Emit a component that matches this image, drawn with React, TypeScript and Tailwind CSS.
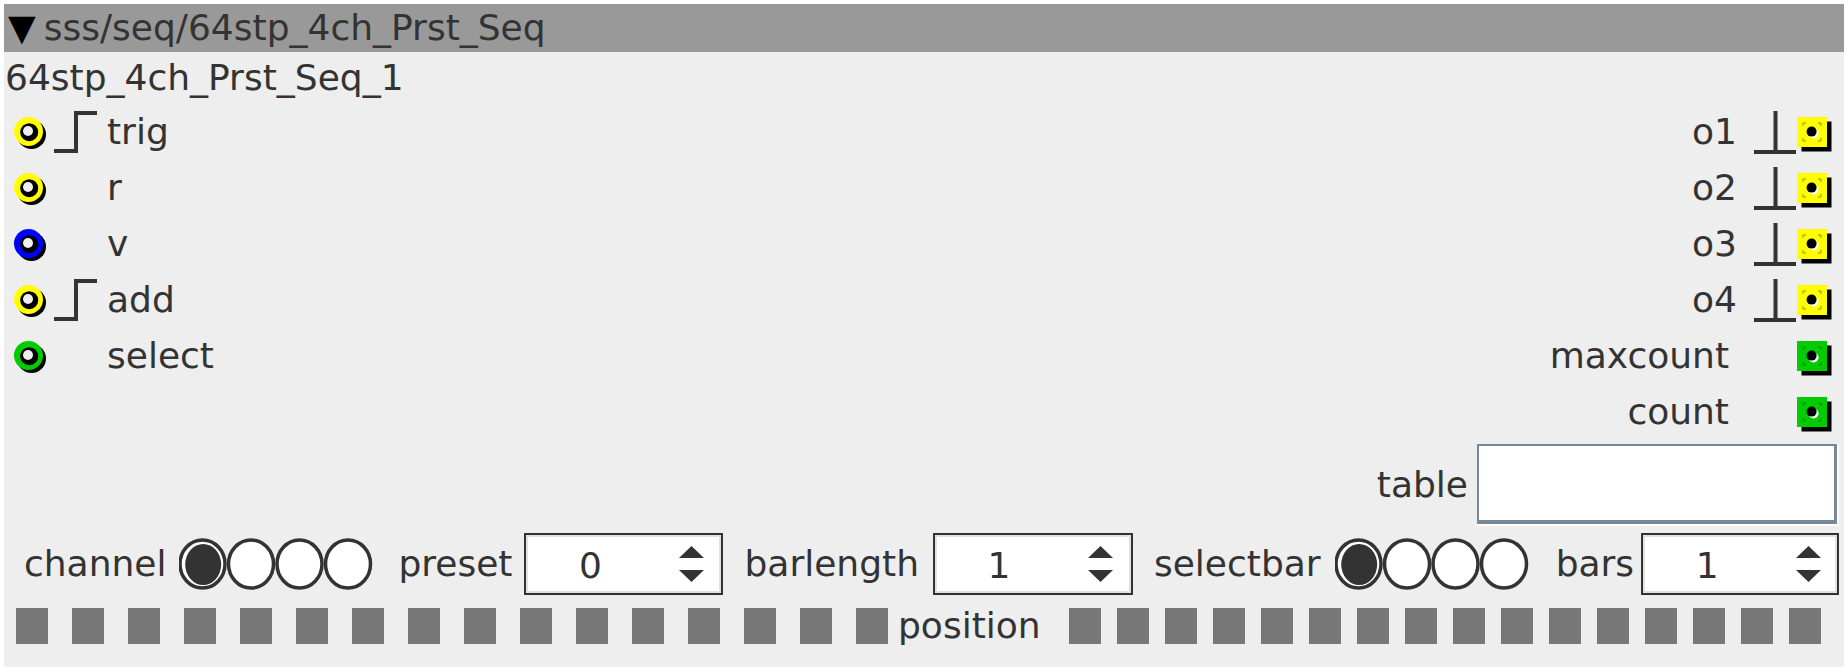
import React from "react";

function Inlet({ color }: { color: string }) {
  return (
    <svg width="33" height="33" viewBox="0 0 33 33">
      <circle cx="17.5" cy="17.5" r="14.5" fill="#000" />
      <circle cx="14.5" cy="14.5" r="14.5" fill={color} />
      <circle cx="15.2" cy="15.2" r="9" fill="#000" />
      <circle cx="14" cy="14" r="5" fill="#eeeeee" />
    </svg>
  );
}

function Outlet({ color }: { color: string }) {
  return (
    <svg width="35" height="35" viewBox="0 0 35 35">
      <rect x="4.5" y="4.5" width="30" height="30" fill="#000" />
      <rect x="0" y="0" width="30" height="30" fill={color} />
      <g stroke="#333" strokeWidth="1" opacity="0.55" fill="none">
        <path d="M6 9 V6 H9" />
        <path d="M21 6 H24 V9" />
        <path d="M6 21 V24 H9" />
        <path d="M21 24 H24 V21" />
      </g>
      <circle cx="16.5" cy="16.5" r="5" fill="#fff" />
      <circle cx="14.6" cy="14.6" r="5" fill="#000" />
    </svg>
  );
}

function TrigSym() {
  return (
    <svg width="43" height="42" viewBox="0 0 43 42">
      <path d="M0 40 H22 V2 H43" fill="none" stroke="#333" strokeWidth="4" />
    </svg>
  );
}

function OutSym() {
  return (
    <svg width="42" height="43" viewBox="0 0 42 43">
      <path d="M21.5 0 V41 M0 41 H42" fill="none" stroke="#333" strokeWidth="4" />
    </svg>
  );
}

function Radios() {
  return (
    <svg width="195" height="52" viewBox="0 0 195 52">
      <defs>
        <clipPath id="radioclip">
          <rect x="1" y="0" width="194" height="52" />
        </clipPath>
      </defs>
      <g clipPath="url(#radioclip)">
        {[0, 1, 2, 3].map((i) => (
          <ellipse
            key={i}
            cx={24.5 + 48.5 * i}
            cy={26}
            rx={22.5}
            ry={24}
            fill="#fff"
            stroke="#333"
            strokeWidth="3.5"
          />
        ))}
        <ellipse cx="25.2" cy="26.5" rx="18" ry="20.5" fill="#333" />
      </g>
    </svg>
  );
}

function Arrows() {
  return (
    <svg width="25" height="36" viewBox="0 0 25 36">
      <path d="M0 12 L12.5 0 L25 12 Z" fill="#333" />
      <path d="M0 24 L25 24 L12.5 36 Z" fill="#333" />
    </svg>
  );
}

function Spin({ value, className }: { value: string; className: string }) {
  return (
    <div className={"h-[62px] border-2 border-[#333] bg-white flex " + className}>
      <div className="flex-1 flex items-center border-2 border-[#e2e2e2]">
        <div className="w-[124px] text-center leading-[44px] pt-[4px]">{value}</div>
        <div className="ml-[27px]">
          <Arrows />
        </div>
      </div>
    </div>
  );
}

const inlets: { label: string; color: string; trig: boolean }[] = [
  { label: "trig", color: "#ffff00", trig: true },
  { label: "r", color: "#ffff00", trig: false },
  { label: "v", color: "#0000ff", trig: false },
  { label: "add", color: "#ffff00", trig: true },
  { label: "select", color: "#00cc00", trig: false },
];

const outlets: { label: string; color: string; sym: boolean }[] = [
  { label: "o1", color: "#ffff00", sym: true },
  { label: "o2", color: "#ffff00", sym: true },
  { label: "o3", color: "#ffff00", sym: true },
  { label: "o4", color: "#ffff00", sym: true },
  { label: "maxcount", color: "#00cc00", sym: false },
  { label: "count", color: "#00cc00", sym: false },
];

export default function App() {
  const sixteen = Array.from({ length: 16 }, (_, i) => i);
  return (
    <div className="w-[1848px] h-[672px] bg-white pt-[4px] pl-[4px] font-['DejaVu_Sans',sans-serif] text-[#333333] text-[36px] leading-none">
      <div className="w-[1840px] h-[663px] bg-[#eeeeee] flex flex-col">
        <div className="h-[48px] bg-[#999999] pl-[4px] leading-[48px] whitespace-pre flex">
          <span className="text-black">▼</span>
          <span className="ml-[8px]">sss/seq/64stp_4ch_Prst_Seq</span>
        </div>
        <div className="h-[52px] leading-[52px] pl-[1px] whitespace-pre">64stp_4ch_Prst_Seq_1</div>

        <div className="flex justify-between">
          <div className="flex flex-col">
            {inlets.map((r) => (
              <div key={r.label} className="h-[56px] flex items-start">
                <div className="mt-[13px] ml-[10px] w-[33px] h-[33px]">
                  <Inlet color={r.color} />
                </div>
                <div className="mt-[7px] ml-[7px] w-[43px] h-[42px]">{r.trig ? <TrigSym /> : null}</div>
                <div className="ml-[10px] leading-[56px]">{r.label}</div>
              </div>
            ))}
          </div>

          <div className="flex flex-col items-end">
            {outlets.map((r) => (
              <div key={r.label} className="h-[56px] flex items-start mr-[12px]">
                <div className="leading-[56px]">{r.label}</div>
                {r.sym ? (
                  <div className="mt-[7px] ml-[17px] w-[42px] h-[43px]">
                    <OutSym />
                  </div>
                ) : (
                  <div className="ml-[25px] w-[42px] h-[43px]" />
                )}
                <div className="mt-[13px] ml-[1px] w-[35px] h-[35px]">
                  <Outlet color={r.color} />
                </div>
              </div>
            ))}
            <div className="mt-[4px] h-[82px] flex items-center mr-[5px]">
              <div>table</div>
              <div className="ml-[9px] w-[362px] h-[82px] border-r-2 border-b-2 border-white flex">
                <div className="flex-1 bg-white border-t-2 border-l-2 border-r-[3px] border-b-[4px] border-[#778899]" />
              </div>
            </div>
          </div>
        </div>

        <div className="mt-[7px] h-[62px] flex items-center pl-[20px]">
          <div>channel</div>
          <div className="ml-[12px] h-[52px]">
            <Radios />
          </div>
          <div className="ml-[25px]">preset</div>
          <Spin value="0" className="ml-[12px] w-[199px]" />
          <div className="ml-[21px]">barlength</div>
          <Spin value="1" className="ml-[14px] w-[200px]" />
          <div className="ml-[21px]">selectbar</div>
          <div className="ml-[13px] h-[52px]">
            <Radios />
          </div>
          <div className="ml-[27px]">bars</div>
          <Spin value="1" className="ml-[7px] w-[198px]" />
        </div>

        <div className="mt-[13px] h-[36px] flex items-center pl-[12px]">
          <div className="flex gap-[24px]">
            {sixteen.map((i) => (
              <div key={i} className="w-[32px] h-[36px] bg-[#777777]" />
            ))}
          </div>
          <div className="ml-[10px]">position</div>
          <div className="ml-[28px] flex gap-[16px]">
            {sixteen.map((i) => (
              <div key={i} className="w-[32px] h-[36px] bg-[#777777]" />
            ))}
          </div>
        </div>
      </div>
    </div>
  );
}
